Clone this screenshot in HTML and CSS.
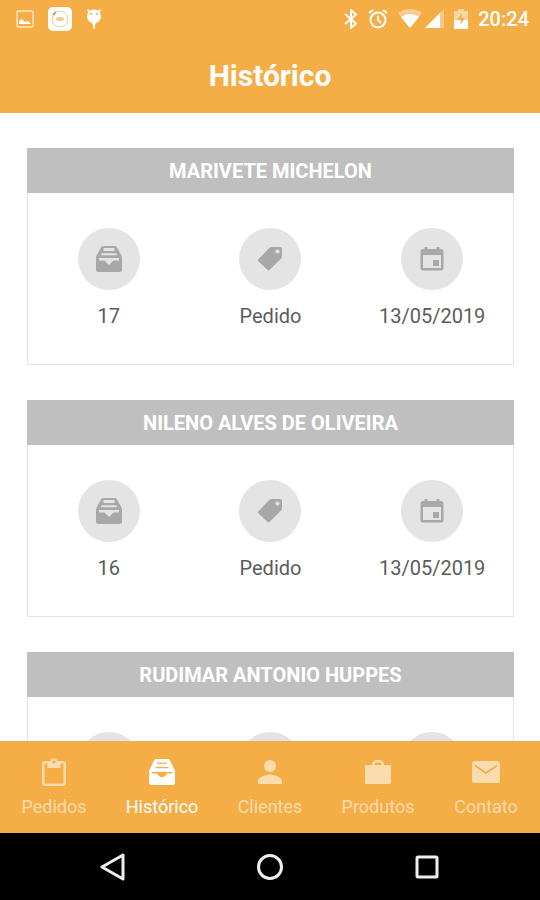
FILE: index.html
```html
<!DOCTYPE html>
<html lang="pt-BR">
<head>
<meta charset="utf-8">
<meta name="viewport" content="width=device-width, initial-scale=1">
<title>Histórico</title>
<link rel="stylesheet" href="styles.css">
</head>
<body>
<svg class="sprite" aria-hidden="true">
  <symbol id="tray" viewBox="0 0 26 26">
    <path fill-rule="evenodd" d="M7 0h12q1.500 0 2 1.500L25.200 9q.8 1.500 .8 3v11.500q0 2.500-2.500 2.500h-21Q0 26 0 23.500V12q0-1.500 .8-3L5 1.500Q5.500 0 7 0zM7.500 2v3h11V2zM5.800 7.200l-1 2h16.400l-1-2zM3 12v2.500h5.500L13 19l4.500-4.500H23V12z"/>
  </symbol>
  <symbol id="tray-solid" viewBox="0 0 26 26">
    <path fill-rule="evenodd" d="M7 0h12q1.500 0 2 1.500L25.200 10q.8 1.500 .8 3v10.500q0 2.500-2.500 2.500h-21Q0 26 0 23.500V13q0-1.500 .8-3L5 1.500Q5.500 0 7 0zM8 3.500v1.200h10V3.500zM6.500 8v1.200h13V8zM3 13v1.500h5.200c1 2.500 2.800 3.700 4.800 3.700s3.800-1.200 4.800-3.700H23V13z"/>
  </symbol>
  <symbol id="tag" viewBox="0 0 26 26">
    <path fill-rule="evenodd" d="M14.500 1h8.500q2 0 2 2v7.500q0 1.200-.9 2L12.700 23.700q-1.200 1.100-2.400 0L1.600 15.400q-1.200-1.200 0-2.400L12.500 1.800Q13.300 1 14.500 1zM20.500 3.400a2.100 2.100 0 1 0 .01 0z"/>
  </symbol>
  <symbol id="calendar" viewBox="0 0 26 26">
    <path fill-rule="evenodd" d="M5.500 1h3v2h9V1h3v2H22q2.500 0 2.500 2.500V22q0 2.500-2.500 2.500H4Q1.500 24.500 1.500 22V5.500Q1.500 3 4 3h1.500zM4 9v13h18V9zM14 14h6v6h-6z"/>
  </symbol>
  <symbol id="clipboard" viewBox="0 0 24 28">
    <path fill-rule="evenodd" d="M3 3h5.300a4 4 0 0 1 7.400 0H21q3 0 3 3v19q0 3-3 3H3q-3 0-3-3V6q0-3 3-3zM2.500 5.500v20h19v-20h-3V10h-13V5.500zM12 2.500a1.500 1.500 0 1 0 .01 0z"/>
  </symbol>
  <symbol id="person" viewBox="0 0 24 24">
    <circle cx="12" cy="6" r="6"/>
    <path d="M0 24v-3c0-4 8-6.500 12-6.500S24 17 24 21v3z"/>
  </symbol>
  <symbol id="case" viewBox="0 0 26 24">
    <path fill-rule="evenodd" d="M0 5h7V3l3-3h6l3 3v2h7v17q0 2-2 2H2q-2 0-2-2zM9.500 5h7V3.500l-1-1h-5l-1 1z"/>
  </symbol>
  <symbol id="mail" viewBox="0 0 28 22">
    <path fill-rule="evenodd" d="M3 0h22q3 0 3 3v16q0 3-3 3H3q-3 0-3-3V3q0-3 3-3zM3 3.600v2L14 13.200l11-7.600v-2L14 11z"/>
  </symbol>
</svg>

<header class="top">
  <div class="status">
    <div class="status-group status-left">
      <svg width="18" height="18" viewBox="0 0 18 18"><rect x="1" y="1" width="16" height="16" rx="1" fill="none" stroke="#fff" stroke-width="1.500" opacity=".7"/><path d="M3 14v-3l3-2 3 3 3-1 3 3z"/></svg>
      <svg width="24" height="24" viewBox="0 0 24 24"><rect width="24" height="24" rx="5"/><circle class="ring" cx="12" cy="12" r="8"/><path class="ring ring-mark" d="M5 8l3-3"/><rect x="8" y="10" width="8" height="4" rx="2" fill="#edcf91"/></svg>
      <svg width="16" height="22" viewBox="0 0 16 22"><path d="M2 1l2 1.500q4-2 8 0L14 1l1 1-1.200 2.500q2 4 .2 7.500-1.500 2.500-4 3l-1 2v3q-1 2-2 0v-3l-1-2q-2.500-.5-4-3-1.800-3.500.2-7.500L1 2z"/><circle cx="5" cy="6" r="1" fill="#f5ad46"/><circle cx="11" cy="6" r="1" fill="#f5ad46"/></svg>
    </div>
    <div class="status-group status-right">
      <svg width="14" height="20" viewBox="0 0 14 20"><path d="M1 5l11 9.500L7 19V1l5 4.500L1 15" fill="none" stroke="#fff" stroke-width="2"/></svg>
      <svg width="20" height="20" viewBox="0 0 20 20"><g fill="none" stroke="#fff" stroke-width="2"><circle cx="10" cy="11" r="7.500"/><path d="M10 6.500V11l3 3M1 4l4-3M19 4l-4-3"/></g></svg>
      <svg width="24" height="20" viewBox="0 0 24 20"><path d="M0 4q12-8 24 0L12 19z" opacity=".4"/><path d="M3 8q9-6 18 0l-9 11z"/></svg>
      <svg class="signal" width="20" height="20" viewBox="0 0 20 20"><path d="M20 0v19H1z" opacity=".35"/><path d="M16 4v15H1z"/></svg>
      <svg width="14" height="20" viewBox="0 0 14 20"><path d="M4 0h6v2h4v9H0V2h4z" opacity=".5"/><path d="M0 11h14v9H0z"/><path d="M8 4l-5 7h4l-1 5 5-7H7z" fill="#f5ad46"/></svg>
      <time class="clock">20:24</time>
    </div>
  </div>
  <h1 class="title">Histórico</h1>
</header>

<main class="list">
  <article class="card">
    <h2 class="card-name">MARIVETE MICHELON</h2>
    <div class="card-body">
      <div class="fact"><span class="disc"><svg><use href="#tray"/></svg></span><span>17</span></div>
      <div class="fact"><span class="disc"><svg><use href="#tag"/></svg></span><span>Pedido</span></div>
      <div class="fact"><span class="disc"><svg><use href="#calendar"/></svg></span><span>13/05/2019</span></div>
    </div>
  </article>
  <article class="card">
    <h2 class="card-name">NILENO ALVES DE OLIVEIRA</h2>
    <div class="card-body">
      <div class="fact"><span class="disc"><svg><use href="#tray"/></svg></span><span>16</span></div>
      <div class="fact"><span class="disc"><svg><use href="#tag"/></svg></span><span>Pedido</span></div>
      <div class="fact"><span class="disc"><svg><use href="#calendar"/></svg></span><span>13/05/2019</span></div>
    </div>
  </article>
  <article class="card">
    <h2 class="card-name">RUDIMAR ANTONIO HUPPES</h2>
    <div class="card-body">
      <div class="fact"><span class="disc"><svg><use href="#tray"/></svg></span></div>
      <div class="fact"><span class="disc"><svg><use href="#tag"/></svg></span></div>
      <div class="fact"><span class="disc"><svg><use href="#calendar"/></svg></span></div>
    </div>
  </article>
</main>

<nav class="tabs">
  <a class="tab" href="#pedidos"><svg width="24" height="28"><use href="#clipboard"/></svg><span>Pedidos</span></a>
  <a class="tab tab-active" href="#historico" aria-current="page"><svg width="26" height="26"><use href="#tray-solid"/></svg><span>Histórico</span></a>
  <a class="tab" href="#clientes"><svg width="24" height="24"><use href="#person"/></svg><span>Clientes</span></a>
  <a class="tab" href="#produtos"><svg width="26" height="24"><use href="#case"/></svg><span>Produtos</span></a>
  <a class="tab" href="#contato"><svg width="28" height="22"><use href="#mail"/></svg><span>Contato</span></a>
</nav>

<div class="system">
  <button type="button" aria-label="Voltar"><svg width="28" height="28" viewBox="0 0 28 28"><path d="M24 2v24L3 14z"/></svg></button>
  <button type="button" aria-label="Início"><svg width="28" height="28" viewBox="0 0 28 28"><circle cx="14" cy="14" r="11.500"/></svg></button>
  <button type="button" aria-label="Recentes"><svg width="28" height="28" viewBox="0 0 28 28"><rect x="4" y="4" width="20" height="20" rx="1"/></svg></button>
</div>
</body>
</html>
```
FILE: styles.css
```css
* { box-sizing: border-box; }

body {
  margin: 0;
  height: 100vh;
  display: flex;
  flex-direction: column;
  font-family: Roboto, "Liberation Sans", sans-serif;
  background: #fff;
  color: #5c5c5c;
}

svg { display: block; fill: currentColor; }
.sprite { display: none; }

.top {
  flex: none;
  background: #f5ad46;
  color: #fff;
  padding-bottom: 17px;
}

.status {
  display: flex;
  justify-content: space-between;
  align-items: center;
  height: 37px;
  padding: 0 11px 0 16px;
}

.status-group { display: flex; align-items: center; }
.status-left { gap: 14px; }
.status-right { gap: 10px; }
.signal { margin-left: -8px; }
.ring { fill: none; stroke: #edcf91; stroke-width: 1; }
.ring-mark { stroke: #c9a352; stroke-width: 2; }
.clock { font-size: 20px; font-weight: 500; line-height: 24px; }

.title {
  margin: 18px 0 0;
  font-size: 30px;
  font-weight: 700;
  line-height: 41px;
  text-align: center;
}

.list {
  flex: 1;
  min-height: 0;
  overflow: hidden;
  display: flex;
  flex-direction: column;
  gap: 35px;
  padding: 35px 26px 0 27px;
}

.card {
  flex: none;
  border: 1px solid #e4e4e4;
  border-top: 0;
}

.card-name {
  margin: 0 -1px;
  padding-top: 1px;
  background: #bfbfbf;
  color: #fff;
  font-size: 20px;
  font-weight: 700;
  line-height: 44px;
  text-align: center;
}

.card-body {
  display: grid;
  grid-template-columns: repeat(3, 1fr);
  padding: 35px 0 34px;
}

.fact {
  display: flex;
  flex-direction: column;
  align-items: center;
  gap: 13px;
  font-size: 20px;
  line-height: 27px;
}

.disc {
  display: grid;
  place-items: center;
  width: 62px;
  height: 62px;
  border-radius: 50%;
  background: #e4e4e4;
  color: #a8a8a8;
}

.disc svg { width: 26px; height: 26px; }

.tabs {
  flex: none;
  display: grid;
  grid-template-columns: repeat(5, 1fr);
  background: #f5ad46;
  padding: 15px 0 9px;
}

.tab {
  display: grid;
  grid-template-rows: 32px 36px;
  place-items: center;
  color: #fbdcae;
  font-size: 18px;
  text-decoration: none;
}

.tab-active { color: #fff; }

.system {
  flex: none;
  display: flex;
  justify-content: center;
  gap: 101px;
  height: 67px;
  background: #000;
}

.system button {
  width: 56px;
  padding: 0;
  border: 0;
  background: none;
  display: grid;
  place-items: center;
}

.system svg { fill: none; stroke: #eee; stroke-width: 3; stroke-linejoin: round; }
```
